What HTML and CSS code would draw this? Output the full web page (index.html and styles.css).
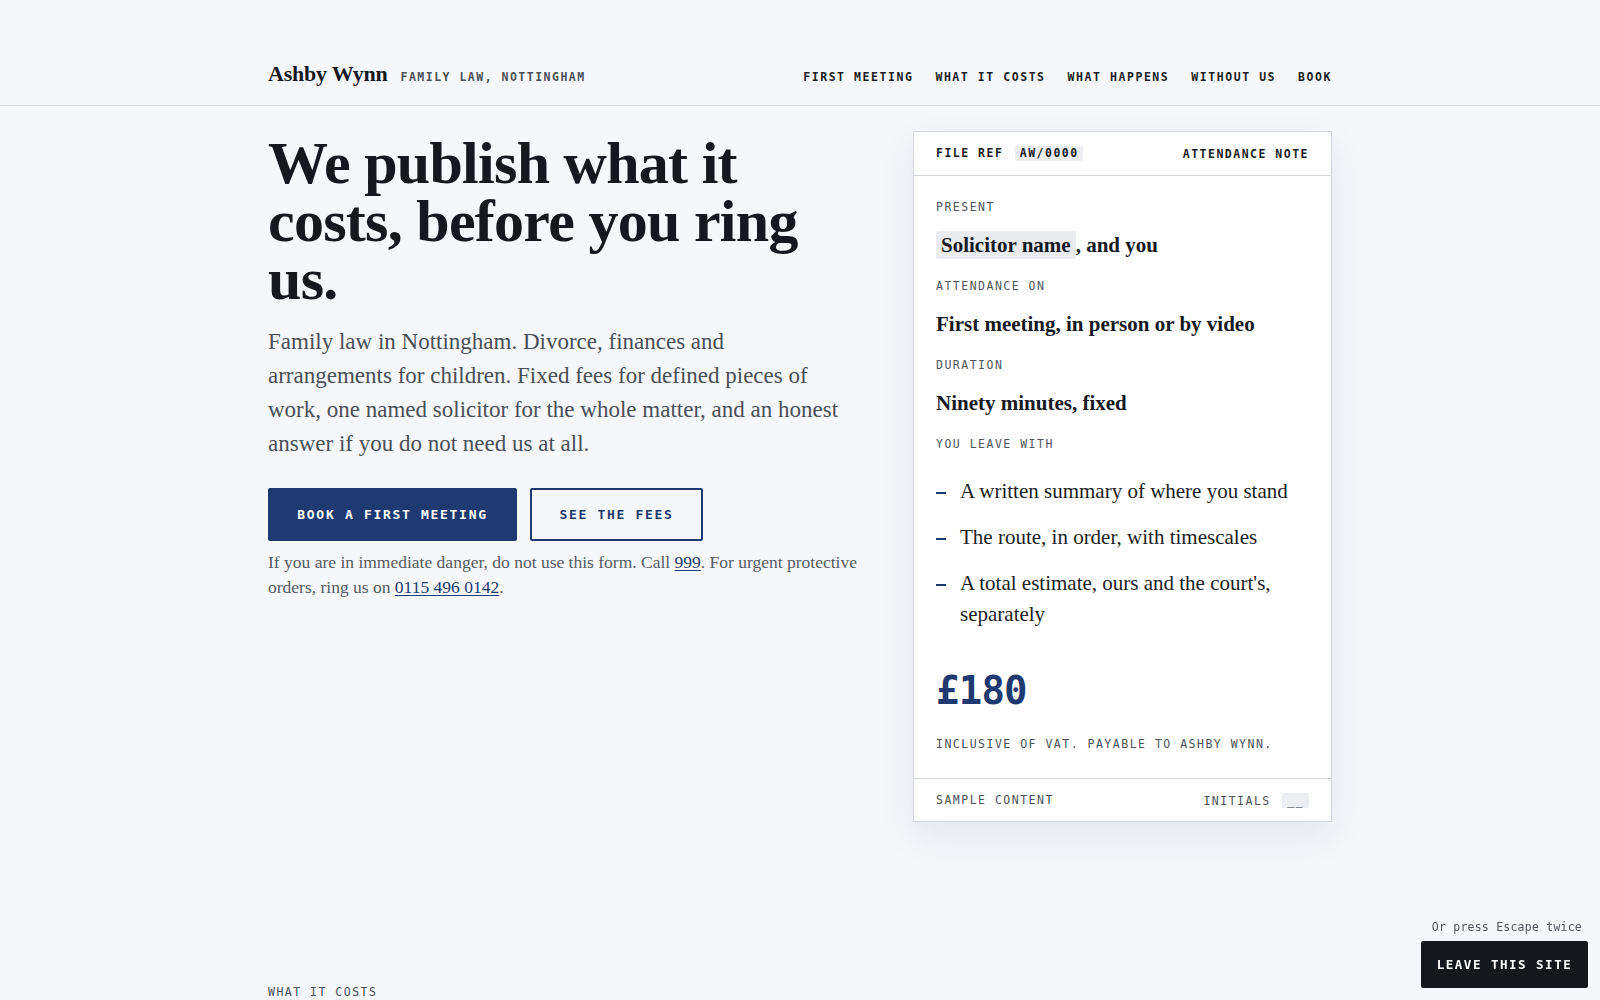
FILE: index.html
```html
<!DOCTYPE html>
<html lang="en">
<head>
<meta charset="utf-8">
<title>Ashby Wynn — Family law, Nottingham</title>
<link rel="stylesheet" href="styles.css">
</head>
<body>
<header class="site-header">
  <div class="wrap header-inner">
    <div class="brand">
      <span class="brand-name">Ashby Wynn</span>
      <span class="brand-tag">FAMILY LAW, NOTTINGHAM</span>
    </div>
    <nav class="nav">
      <a href="#">FIRST MEETING</a>
      <a href="#">WHAT IT COSTS</a>
      <a href="#">WHAT HAPPENS</a>
      <a href="#">WITHOUT US</a>
      <a href="#">BOOK</a>
    </nav>
  </div>
</header>

<main class="wrap">
  <section class="hero">
    <div class="hero-copy">
      <h1 class="hero-title">We publish what it costs, before you ring us.</h1>
      <p class="hero-lede">Family law in Nottingham. Divorce, finances and arrangements for children. Fixed fees for defined pieces of work, one named solicitor for the whole matter, and an honest answer if you do not need us at all.</p>
      <div class="actions">
        <a class="btn btn-primary" href="#">BOOK A FIRST MEETING</a>
        <a class="btn btn-outline" href="#">SEE THE FEES</a>
      </div>
      <p class="danger-note">If you are in immediate danger, do not use this form. Call <a href="#">999</a>. For urgent protective orders, ring us on <a href="#">0115 496 0142</a>.</p>
    </div>

    <aside class="note-card">
      <div class="card-head">
        <span>FILE REF <span class="chip">AW/0000</span></span>
        <span>ATTENDANCE NOTE</span>
      </div>
      <div class="card-body">
        <dl class="fields">
          <dt>PRESENT</dt>
          <dd><span class="name-chip">Solicitor name</span>, and you</dd>
          <dt>ATTENDANCE ON</dt>
          <dd>First meeting, in person or by video</dd>
          <dt>DURATION</dt>
          <dd>Ninety minutes, fixed</dd>
          <dt>YOU LEAVE WITH</dt>
        </dl>
        <ul class="leave-list">
          <li>A written summary of where you stand</li>
          <li>The route, in order, with timescales</li>
          <li>A total estimate, ours and the court's, separately</li>
        </ul>
        <div class="price">£180</div>
        <p class="price-note">INCLUSIVE OF VAT. PAYABLE TO ASHBY WYNN.</p>
      </div>
      <div class="card-foot">
        <span>SAMPLE CONTENT</span>
        <span>INITIALS <span class="chip">__</span></span>
      </div>
    </aside>
  </section>

  <section class="costs">
    <p class="section-label">WHAT IT COSTS</p>
  </section>
</main>

<div class="leave">
  <p class="leave-hint">Or press Escape twice</p>
  <a class="leave-btn" href="#">LEAVE THIS SITE</a>
</div>
</body>
</html>
```

FILE: styles.css
```css
* { box-sizing: border-box; }

html, body {
  margin: 0;
  padding: 0;
  background: #f6f7fb;
  color: #16191f;
}

body {
  font-family: "Liberation Serif", "DejaVu Serif", serif;
}

a { color: inherit; }

.wrap {
  width: 1064px;
  margin: 0 auto;
}

.brand-tag,
.nav a,
.btn,
.card-head,
.card-foot,
.fields dt,
.price,
.price-note,
.section-label,
.leave-hint,
.leave-btn {
  font-family: "DejaVu Sans Mono", "Liberation Mono", monospace;
}

/* header */
.site-header {
  border-bottom: 1px solid #d6d8de;
}

.header-inner {
  display: flex;
  align-items: baseline;
  justify-content: space-between;
  padding: 60px 0 17px;
}

.brand {
  display: flex;
  align-items: baseline;
  gap: 13px;
}

.brand-name {
  font-size: 22px;
  font-weight: 700;
  line-height: 28px;
  letter-spacing: -0.01em;
}

.brand-tag {
  font-size: 11.5px;
  font-weight: 700;
  letter-spacing: 0.13em;
  color: #4b5058;
}

.nav {
  display: flex;
  gap: 22px;
}

.nav a {
  font-size: 11.5px;
  font-weight: 700;
  letter-spacing: 0.135em;
  text-decoration: none;
  color: #1a1d23;
}

/* hero */
.hero {
  display: grid;
  grid-template-columns: 592px 419px;
  justify-content: space-between;
  align-items: start;
  padding-top: 25px;
}

.hero-title {
  margin: 3px 0 0;
  font-size: 60px;
  line-height: 58px;
  font-weight: 700;
  letter-spacing: -0.012em;
  max-width: 560px;
  color: #15181e;
}

.hero-lede {
  margin: 17px 0 0;
  font-size: 23px;
  line-height: 34px;
  color: #4a4f58;
  max-width: 578px;
}

.actions {
  display: flex;
  gap: 13px;
  margin-top: 27px;
}

.btn {
  display: inline-flex;
  align-items: center;
  justify-content: center;
  height: 53px;
  font-size: 13px;
  font-weight: 700;
  letter-spacing: 0.13em;
  text-decoration: none;
  border-radius: 2px;
}

.btn-primary {
  width: 249px;
  background: #1e3a70;
  color: #ffffff;
}

.btn-outline {
  width: 173px;
  border: 2px solid #1e3a70;
  color: #1e3a70;
  background: transparent;
}

.danger-note {
  margin: 9px 0 0;
  font-size: 17.5px;
  line-height: 24.5px;
  color: #565b63;
}

.danger-note a {
  color: #1e3a70;
  text-decoration: underline;
  text-underline-offset: 2px;
}

/* card */
.note-card {
  background: #ffffff;
  border: 1px solid #d3d6dc;
  box-shadow: 0 14px 34px rgba(22, 32, 60, 0.08);
}

.card-head,
.card-foot {
  display: flex;
  justify-content: space-between;
  align-items: center;
  padding: 0 22px;
  font-size: 11.5px;
  letter-spacing: 0.13em;
}

.card-head {
  height: 44px;
  border-bottom: 1px solid #d3d6dc;
  font-weight: 700;
  color: #1a1d23;
}

.card-foot {
  height: 43px;
  border-top: 1px solid #d3d6dc;
  color: #4b5058;
}

.chip {
  display: inline-block;
  background: #eceef1;
  padding: 0 4px 0 5px;
  margin-left: 3px;
  line-height: 15px;
  border-radius: 2px;
}

.card-foot .chip {
  color: #2a2e35;
  padding: 1px 5px 0;
  line-height: 14px;
}

.card-body {
  padding: 23px 22px 26px;
}

.fields {
  margin: 0;
}

.fields dt {
  font-size: 11.5px;
  line-height: 16px;
  letter-spacing: 0.13em;
  color: #50555d;
  margin: 0 0 15px;
}

.fields dd {
  margin: 0 0 18px;
  font-size: 21px;
  line-height: 30px;
  font-weight: 700;
  color: #16191f;
}

.name-chip {
  display: inline-block;
  background: #e9ebef;
  padding: 0 5px;
  line-height: 28px;
  border-radius: 2px;
}

.leave-list {
  list-style: none;
  margin: 24px 0 0;
  padding: 0;
  display: flex;
  flex-direction: column;
  gap: 15px;
}

.leave-list li {
  position: relative;
  padding-left: 24px;
  font-size: 21px;
  line-height: 31px;
  color: #1b1e24;
}

.leave-list li::before {
  content: "";
  position: absolute;
  left: 0;
  top: 16px;
  width: 10px;
  height: 2px;
  background: #1e3a70;
}

.price {
  margin-top: 39px;
  font-size: 39px;
  line-height: 44px;
  font-weight: 700;
  color: #1e3a70;
  letter-spacing: -0.02em;
}

.price-note {
  margin: 23px 0 0;
  font-size: 11.5px;
  line-height: 16px;
  letter-spacing: 0.13em;
  color: #4b5058;
}

/* next section */
.costs {
  padding-top: 163px;
}

.section-label {
  margin: 0;
  font-size: 11.5px;
  letter-spacing: 0.13em;
  color: #4b5058;
}

/* quick exit */
.leave {
  position: fixed;
  right: 12px;
  bottom: 12px;
  display: flex;
  flex-direction: column;
  align-items: flex-end;
}

.leave-hint {
  margin: 0 0 7px;
  font-size: 11.5px;
  letter-spacing: 0.02em;
  color: #50555d;
  padding-right: 6px;
}

.leave-btn {
  display: inline-flex;
  align-items: center;
  justify-content: center;
  width: 167px;
  height: 47px;
  background: #14171c;
  color: #ffffff;
  font-size: 12.5px;
  font-weight: 700;
  letter-spacing: 0.12em;
  text-decoration: none;
  border-radius: 2px;
}
```
